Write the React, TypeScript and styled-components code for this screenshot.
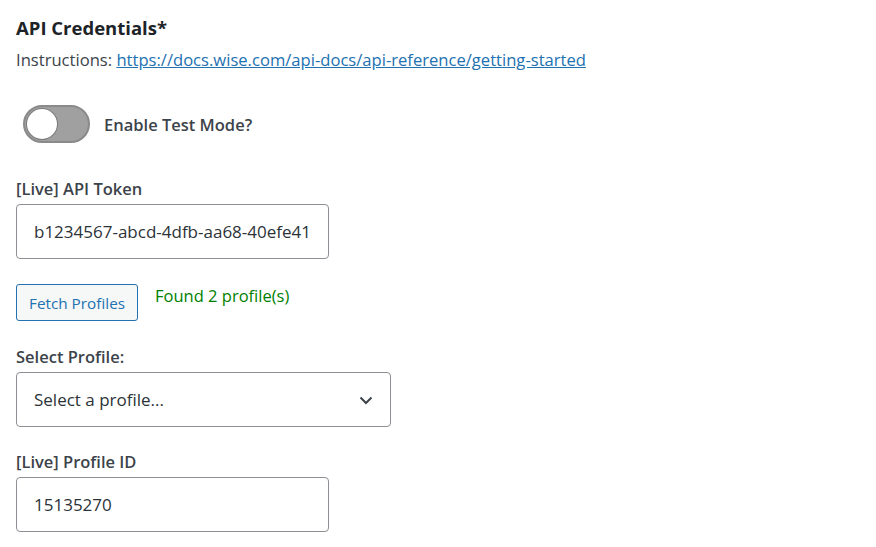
import React from 'react'
import styled, { createGlobalStyle } from 'styled-components'

const GlobalStyle = createGlobalStyle`
  body {
    margin: 0;
    background: #ffffff;
    font-family: "Open Sans", "Noto Sans", sans-serif;
    color: #3c434a;
  }
`

const Page = styled.div`
  padding: 15px 16px 0 16px;
  display: flex;
  flex-direction: column;
`

const Heading = styled.h2`
  margin: 0;
  font-size: 18.5px;
  line-height: 26px;
  font-weight: 700;
  color: #1d2327;
`

const Instructions = styled.p`
  margin: 6px 0 0 0;
  font-size: 16.6px;
  line-height: 26px;
  color: #3c434a;

  a {
    color: #2271b1;
    text-decoration: underline;
  }
`

const ToggleRow = styled.label`
  display: flex;
  align-items: center;
  gap: 14px;
  margin-top: 32px;
  padding-left: 7px;
`

const Track = styled.span<{ on?: boolean }>`
  width: 67px;
  height: 38px;
  box-sizing: border-box;
  border-radius: 19px;
  background: ${(p) => (p.on ? '#2271b1' : '#a0a0a0')};
  border: 2px solid #8a8a8a;
  display: flex;
  align-items: center;
  padding: 0 2px;
  justify-content: ${(p) => (p.on ? 'flex-end' : 'flex-start')};
`

const Knob = styled.span`
  width: 30px;
  height: 30px;
  border-radius: 50%;
  background: #ffffff;
  box-shadow: 0 0 0 1px #7a7a7a;
`

const BoldText = styled.span`
  font-size: 16.5px;
  font-weight: 600;
  color: #3c434a;
`

const Field = styled.div<{ top: number }>`
  display: flex;
  flex-direction: column;
  gap: 4px;
  margin-top: ${(p) => p.top}px;
`

const Label = styled.label`
  font-size: 16.5px;
  line-height: 22px;
  font-weight: 600;
  color: #3c434a;
`

const TextInput = styled.input<{ w: number }>`
  width: ${(p) => p.w}px;
  height: 55px;
  box-sizing: border-box;
  border: 1px solid #8c8f94;
  border-radius: 4px;
  padding: 0 17px;
  font-family: "Open Sans", "Noto Sans", sans-serif;
  font-size: 17px;
  color: #2c3338;
  background: #fff;
  outline: none;
`

const ActionRow = styled.div`
  display: flex;
  align-items: flex-start;
  gap: 17px;
  margin-top: 25px;
`

const Button = styled.button`
  height: 37px;
  padding: 0 12px;
  box-sizing: border-box;
  border: 1px solid #2271b1;
  border-radius: 3px;
  background: #f6f7f7;
  color: #2271b1;
  font-family: "Open Sans", "Noto Sans", sans-serif;
  font-size: 15.3px;
  cursor: pointer;
`

const Status = styled.span`
  color: #008000;
  font-size: 16.5px;
  line-height: 24px;
`

const SelectBox = styled.div`
  width: 375px;
  height: 55px;
  box-sizing: border-box;
  border: 1px solid #8c8f94;
  border-radius: 4px;
  display: flex;
  align-items: center;
  justify-content: space-between;
  padding: 0 16px 0 17px;
  font-size: 17px;
  color: #2c3338;
`

const Chevron = () => (
  <svg width="16" height="16" viewBox="0 0 16 16" fill="none">
    <path d="M2.5 5.5l5.5 5.5 5.5-5.5" stroke="#3c434a" strokeWidth="2" />
  </svg>
)

export default function App() {
  return (
    <Page>
      <GlobalStyle />
      <Heading>API Credentials*</Heading>
      <Instructions>
        Instructions:{' '}
        <a href="#">https://docs.wise.com/api-docs/api-reference/getting-started</a>
      </Instructions>
      <ToggleRow>
        <Track>
          <Knob />
        </Track>
        <BoldText>Enable Test Mode?</BoldText>
      </ToggleRow>
      <Field top={35}>
        <Label>[Live] API Token</Label>
        <TextInput w={313} defaultValue="b1234567-abcd-4dfb-aa68-40efe41" />
      </Field>
      <ActionRow>
        <Button>Fetch Profiles</Button>
        <Status>Found 2 profile(s)</Status>
      </ActionRow>
      <Field top={25}>
        <Label>Select Profile:</Label>
        <SelectBox>
          <span>Select a profile...</span>
          <Chevron />
        </SelectBox>
      </Field>
      <Field top={24}>
        <Label>[Live] Profile ID</Label>
        <TextInput w={313} defaultValue="15135270" />
      </Field>
    </Page>
  )
}
